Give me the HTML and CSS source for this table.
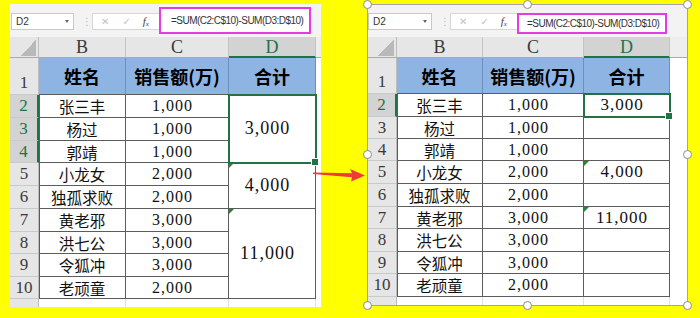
FILE: index.html
```html
<!DOCTYPE html>
<html lang="zh">
<head>
<meta charset="utf-8">
<title>SUM 合并单元格</title>
<link rel="stylesheet" href="styles.css">
</head>
<body>
<section class="panel panel-l">
  <div class="fbar">
    <div class="namebox"><span>D2</span><b class="caret"></b></div>
    <div class="dots">⋮</div>
    <div class="btns"><span class="bx">✕</span><span class="bk">✓</span><span class="fx"><i>f</i><sub>x</sub></span></div>
    <div class="hl">=SUM(C2:C$10)-SUM(D3:D$10)</div>
  </div>
  <div class="sheet">
    <div class="corner"><i></i></div>
    <div class="ch">B</div><div class="ch">C</div><div class="ch ch-sel">D</div><div class="ch ch-x"></div>
    <div class="rh rh1">1</div><div class="th">姓名</div><div class="th">销售额(万)</div><div class="th">合计</div><div class="ex"></div>
    <div class="rh sel">2</div><div class="td nm">张三丰</div><div class="td num">1,000</div><div class="td tot s3 selbox">3,000</div><div class="ex"></div>
    <div class="rh sel">3</div><div class="td nm">杨过</div><div class="td num">1,000</div><div class="ex"></div>
    <div class="rh sel">4</div><div class="td nm">郭靖</div><div class="td num">1,000</div><div class="ex"></div>
    <div class="rh">5</div><div class="td nm">小龙女</div><div class="td num">2,000</div><div class="td tot s2 err">4,000</div><div class="ex"></div>
    <div class="rh">6</div><div class="td nm">独孤求败</div><div class="td num">2,000</div><div class="ex"></div>
    <div class="rh">7</div><div class="td nm">黄老邪</div><div class="td num">3,000</div><div class="td tot s4 err">11,000</div><div class="ex"></div>
    <div class="rh">8</div><div class="td nm">洪七公</div><div class="td num">3,000</div><div class="ex"></div>
    <div class="rh">9</div><div class="td nm">令狐冲</div><div class="td num">3,000</div><div class="ex"></div>
    <div class="rh">10</div><div class="td nm">老顽童</div><div class="td num">2,000</div><div class="ex"></div>
    <div class="rh rh-p"></div><div class="gp"></div><div class="gp"></div><div class="gp"></div><div class="ex"></div>
  </div>
</section>

<svg class="arrow" width="60" height="20" viewBox="0 0 60 20">
  <polygon points="2,6.5 41,7.2 39,3 54,9.5 40,15.5 41,11.2 2,8" fill="#f03a3a"/>
</svg>

<section class="panel panel-r">
  <div class="fbar">
    <div class="namebox"><span>D2</span><b class="caret"></b></div>
    <div class="dots">⋮</div>
    <div class="btns"><span class="bx">✕</span><span class="bk">✓</span><span class="fx"><i>f</i><sub>x</sub></span></div>
    <div class="hl">=SUM(C2:C$10)-SUM(D3:D$10)</div>
  </div>
  <div class="sheet">
    <div class="corner"><i></i></div>
    <div class="ch">B</div><div class="ch">C</div><div class="ch ch-sel">D</div><div class="ch ch-x"></div>
    <div class="rh rh1">1</div><div class="th">姓名</div><div class="th">销售额(万)</div><div class="th">合计</div><div class="ex"></div>
    <div class="rh sel">2</div><div class="td nm">张三丰</div><div class="td num">1,000</div><div class="td tot selbox">3,000</div><div class="ex"></div>
    <div class="rh">3</div><div class="td nm">杨过</div><div class="td num">1,000</div><div class="td tot"></div><div class="ex"></div>
    <div class="rh">4</div><div class="td nm">郭靖</div><div class="td num">1,000</div><div class="td tot"></div><div class="ex"></div>
    <div class="rh">5</div><div class="td nm">小龙女</div><div class="td num">2,000</div><div class="td tot err">4,000</div><div class="ex"></div>
    <div class="rh">6</div><div class="td nm">独孤求败</div><div class="td num">2,000</div><div class="td tot"></div><div class="ex"></div>
    <div class="rh">7</div><div class="td nm">黄老邪</div><div class="td num">3,000</div><div class="td tot err">11,000</div><div class="ex"></div>
    <div class="rh">8</div><div class="td nm">洪七公</div><div class="td num">3,000</div><div class="td tot"></div><div class="ex"></div>
    <div class="rh">9</div><div class="td nm">令狐冲</div><div class="td num">3,000</div><div class="td tot"></div><div class="ex"></div>
    <div class="rh">10</div><div class="td nm">老顽童</div><div class="td num">2,000</div><div class="td tot"></div><div class="ex"></div>
    <div class="rh rh-p"></div><div class="gp"></div><div class="gp"></div><div class="gp"></div><div class="ex"></div>
  </div>
  <span class="hd h-tl"></span><span class="hd h-tm"></span><span class="hd h-tr"></span>
  <span class="hd h-ml"></span><span class="hd h-mr"></span>
  <span class="hd h-bl"></span><span class="hd h-bm"></span><span class="hd h-br"></span>
</section>
</body>
</html>
```
FILE: styles.css
```css
* { box-sizing: border-box; }
html, body { margin: 0; padding: 0; }
body {
  width: 700px;
  height: 318px;
  overflow: hidden;
  background: #ffff00;
  display: flex;
  align-items: flex-start;
  position: relative;
  font-family: "Liberation Sans", Arial, sans-serif;
}

.panel {
  background: #ffffff;
  display: flex;
  flex-direction: column;
  position: relative;
}
.panel-l { margin: 4px 0 0 10px; width: 311px; height: 303px; }
.panel-r { margin: 4px 0 0 46px; width: 321px; height: 302px; border: 1px solid #a3a3a3; }

/* formula bar */
.fbar {
  display: flex;
  align-items: center;
  background: #f3f3f3;
  flex: none;
}
.panel-l .fbar { height: 33px; padding-left: 1px; }
.panel-r .fbar { height: 32px; padding-left: 0; }

.namebox {
  width: 63px;
  height: 17px;
  margin-top: 1px;
  background: #fff;
  border: 1px solid #c9c9c9;
  display: flex;
  align-items: center;
  justify-content: space-between;
  padding: 0 4px 0 4px;
  font-size: 10px;
  color: #333;
}
.panel-r .namebox { width: 64px; }
.caret {
  width: 0; height: 0;
  border-left: 2.5px solid transparent;
  border-right: 2.5px solid transparent;
  border-top: 3px solid #666;
}
.dots {
  margin-left: 8px;
  width: 4px;
  font-family: "DejaVu Sans", sans-serif;
  font-size: 10px;
  color: #b5b5b5;
  margin-top: 1px;
}
.btns {
  margin-left: 6px;
  width: 67px;
  height: 17px;
  margin-top: 1px;
  background: #fff;
  border: 1px solid #d6d6d6;
  border-right: none;
  display: flex;
  align-items: center;
  font-family: "DejaVu Sans", sans-serif;
  font-size: 10px;
  color: #c2c2c2;
}
.bx { margin-left: 8px; }
.bk { margin-left: 13px; }
.fx {
  margin-left: 12px;
  font-family: "Liberation Serif", serif;
  color: #444;
  font-size: 11px;
}
.fx i { font-style: italic; }
.fx sub { font-size: 7px; font-style: italic; vertical-align: -1px; }

.hl {
  align-self: flex-end;
  margin-bottom: 3px;
  border: 2px solid #e53be5;
  background: #fff;
  display: flex;
  align-items: center;
  font-size: 10px;
  letter-spacing: -0.52px;
  color: #333;
  white-space: nowrap;
}
.panel-l .hl { margin-left: 0; width: 152px; height: 27px; padding-left: 10px; }
.panel-r .hl { margin-left: 0; width: 150px; height: 21px; padding-left: 8px; }

/* sheet grid */
.sheet {
  flex: 1;
  display: grid;
  min-height: 0;
  overflow: hidden;
}
.panel-l .sheet {
  grid-template-columns: 29px 87px 103px 87px 1fr;
  grid-template-rows: 21px 37px 23px 23px 22px 23px 23px 23px 22px 23px 22px 1fr;
}
.panel-r .sheet {
  grid-template-columns: 29px 86px 101px 86px 1fr;
  grid-template-rows: 21px 36px 23px 22px 22px 23px 23px 22px 23px 22px 23px 1fr;
}

.corner {
  background: #e6e6e6;
  border-right: 1px solid #bdbdbd;
  border-bottom: 1px solid #ababab;
  display: flex;
  justify-content: flex-end;
  align-items: flex-end;
  padding: 0 2px 1px 0;
}
.corner i {
  width: 16px;
  height: 16px;
  background: linear-gradient(to bottom right, transparent 50%, #b9b9b9 50%);
}

.ch {
  background: #e6e6e6;
  border-right: 1px solid #c4c4c4;
  border-bottom: 1px solid #ababab;
  display: flex;
  align-items: center;
  justify-content: center;
  font-family: "Liberation Serif", serif;
  font-size: 18px;
  color: #3a3a3a;
  padding-top: 1px;
}
.ch-sel {
  background: #d3d3d3;
  color: #217346;
  border-bottom: 2px solid #217346;
}
.ch-x { background: #eeeeee; border-right: none; }

.rh {
  background: #e6e6e6;
  border-right: 1px solid #bdbdbd;
  border-bottom: 1px solid #c9c9c9;
  display: flex;
  align-items: center;
  justify-content: center;
  font-family: "Liberation Serif", serif;
  font-size: 17px;
  color: #3a3a3a;
}
.rh1 { align-items: flex-end; padding-bottom: 1px; }
.rh.sel {
  background: #d3d3d3;
  color: #217346;
  border-right: 2px solid #217346;
}
.rh-p { border-bottom: none; }

.th {
  background: #8db4e2;
  border-right: 1px solid #6c8fbd;
  border-bottom: 1px solid #5c5c5c;
  display: flex;
  align-items: center;
  justify-content: center;
  font-family: "Noto Sans CJK SC", sans-serif;
  font-weight: 700;
  font-size: 18px;
  color: #000;
}

.td {
  background: #fff;
  border-right: 1px solid #5c5c5c;
  border-bottom: 1px solid #5c5c5c;
  display: flex;
  align-items: center;
  justify-content: center;
  color: #111;
  position: relative;
}
.nm {
  font-family: "Noto Sans CJK SC", sans-serif;
  font-size: 15.5px;
  box-shadow: inset 1px 0 0 #5c5c5c;
}
.num {
  font-family: "Liberation Serif", serif;
  font-size: 16px;
  letter-spacing: 1px;
  padding-right: 9px;
}
.tot {
  font-family: "Liberation Serif", serif;
  font-size: 17px;
  letter-spacing: 1px;
  padding-right: 9px;
}
.panel-l .tot { font-size: 18px; }
.s2 { grid-row: span 2; }
.s3 { grid-row: span 3; }
.s4 { grid-row: span 4; }

.selbox {
  outline: 2px solid #217346;
  outline-offset: -1px;
  z-index: 2;
}
.selbox::after {
  content: "";
  position: absolute;
  right: -4px;
  bottom: -4px;
  width: 6px;
  height: 6px;
  background: #217346;
  border: 1px solid #fff;
}
.err::before {
  content: "";
  position: absolute;
  left: 0;
  top: 0;
  width: 0;
  height: 0;
  border-top: 5px solid #1f8a33;
  border-right: 5px solid transparent;
}

.gp { background: #fff; border-right: 1px solid #e0e0e0; }
.ex { background: #fff; }

/* arrow */
.arrow {
  position: absolute;
  left: 311px;
  top: 166px;
  z-index: 5;
}

/* selection handles */
.hd {
  position: absolute;
  width: 9px;
  height: 9px;
  border-radius: 50%;
  background: #fff;
  border: 1px solid #8c8c8c;
  z-index: 6;
}
.h-tl { left: -5px; top: -5px; }
.h-tm { left: 155px; top: -5px; }
.h-tr { right: -5px; top: -5px; }
.h-ml { left: -5px; top: 145px; }
.h-mr { right: -5px; top: 145px; }
.h-bl { left: -5px; bottom: -5px; }
.h-bm { left: 155px; bottom: -5px; }
.h-br { right: -5px; bottom: -5px; }
```
